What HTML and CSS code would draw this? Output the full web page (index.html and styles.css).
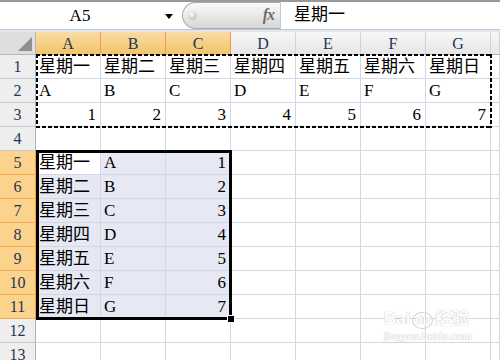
FILE: index.html
```html
<!DOCTYPE html>
<html lang="zh">
<head>
    <meta charset="UTF-8">
    <title>星期一</title>
    <link rel="stylesheet" href="styles.css">
</head>
<body>
    <div class="formula-bar">
        <div class="name-box">A5<span class="drop"></span></div>
        <div class="fx-pill"><span class="knob"></span><span class="fx">fx</span></div>
        <div class="formula-input">星期一</div>
    </div>

    <div class="sheet">
        <div class="corner"></div>
        <div class="ch on">A</div><div class="ch on">B</div><div class="ch on">C</div>
        <div class="ch">D</div><div class="ch">E</div><div class="ch">F</div><div class="ch">G</div><div class="ch"></div>

        <div class="rh">1</div>
        <div class="cell">星期一</div><div class="cell">星期二</div><div class="cell">星期三</div><div class="cell">星期四</div>
        <div class="cell">星期五</div><div class="cell">星期六</div><div class="cell">星期日</div><div class="cell"></div>

        <div class="rh">2</div>
        <div class="cell">A</div><div class="cell">B</div><div class="cell">C</div><div class="cell">D</div>
        <div class="cell">E</div><div class="cell">F</div><div class="cell">G</div><div class="cell"></div>

        <div class="rh">3</div>
        <div class="cell num">1</div><div class="cell num">2</div><div class="cell num">3</div><div class="cell num">4</div>
        <div class="cell num">5</div><div class="cell num">6</div><div class="cell num">7</div><div class="cell"></div>

        <div class="rh">4</div>
        <div class="cell"></div><div class="cell"></div><div class="cell"></div><div class="cell"></div>
        <div class="cell"></div><div class="cell"></div><div class="cell"></div><div class="cell"></div>

        <div class="rh on">5</div>
        <div class="cell active">星期一</div><div class="cell sel">A</div><div class="cell sel num">1</div><div class="cell"></div>
        <div class="cell"></div><div class="cell"></div><div class="cell"></div><div class="cell"></div>

        <div class="rh on">6</div>
        <div class="cell sel">星期二</div><div class="cell sel">B</div><div class="cell sel num">2</div><div class="cell"></div>
        <div class="cell"></div><div class="cell"></div><div class="cell"></div><div class="cell"></div>

        <div class="rh on">7</div>
        <div class="cell sel">星期三</div><div class="cell sel">C</div><div class="cell sel num">3</div><div class="cell"></div>
        <div class="cell"></div><div class="cell"></div><div class="cell"></div><div class="cell"></div>

        <div class="rh on">8</div>
        <div class="cell sel">星期四</div><div class="cell sel">D</div><div class="cell sel num">4</div><div class="cell"></div>
        <div class="cell"></div><div class="cell"></div><div class="cell"></div><div class="cell"></div>

        <div class="rh on">9</div>
        <div class="cell sel">星期五</div><div class="cell sel">E</div><div class="cell sel num">5</div><div class="cell"></div>
        <div class="cell"></div><div class="cell"></div><div class="cell"></div><div class="cell"></div>

        <div class="rh on">10</div>
        <div class="cell sel">星期六</div><div class="cell sel">F</div><div class="cell sel num">6</div><div class="cell"></div>
        <div class="cell"></div><div class="cell"></div><div class="cell"></div><div class="cell"></div>

        <div class="rh on">11</div>
        <div class="cell sel">星期日</div><div class="cell sel">G</div><div class="cell sel num">7</div><div class="cell"></div>
        <div class="cell"></div><div class="cell"></div><div class="cell"></div><div class="cell"></div>

        <div class="rh">12</div>
        <div class="cell"></div><div class="cell"></div><div class="cell"></div><div class="cell"></div>
        <div class="cell"></div><div class="cell"></div><div class="cell"></div><div class="cell"></div>

        <div class="rh">13</div>
        <div class="cell"></div><div class="cell"></div><div class="cell"></div><div class="cell"></div>
        <div class="cell"></div><div class="cell"></div><div class="cell"></div><div class="cell"></div>

        <!-- copied range A1:G3 -->
        <div class="ants"></div>
        <!-- selected range A5:C11 -->
        <div class="selection"><span class="handle"></span></div>

        <div class="watermark">
            <div class="wm-logo">Bai<span class="paw">du</span>经验</div>
            <div class="wm-url">jingyan.baidu.com</div>
        </div>
    </div>
</body>
</html>
```

FILE: styles.css
```css
body{
    margin: 0;
    width: 500px;
    height: 360px;
    overflow: hidden;
    background: #fff;
    font-family: "Liberation Serif", "Noto Sans CJK SC", serif;
    color: #000;
}

/* formula bar */
.formula-bar{
    display: flex;
    height: 27px;
    border-top: 2px solid #9a9a9a;
    border-bottom: 1px solid #b9c6d6;
    box-shadow: 0 2px 0 #e3e6ea;
    margin-bottom: 2px;
    background: #fff;
}
.name-box{
    position: relative;
    width: 182px;
    padding-right: 22px;
    box-sizing: border-box;
    text-align: center;
    font-size: 17px;
    line-height: 27px;
}
.drop{
    position: absolute;
    right: 9px;
    top: 12px;
    border-left: 4px solid transparent;
    border-right: 4px solid transparent;
    border-top: 5px solid #000;
}
.fx-pill{
    position: relative;
    width: 99px;
    border-radius: 14px 0 0 14px;
    border: 1px solid #a9a9a9;
    border-right-color: #c6c6c6;
    background: linear-gradient(#fafafa, #e9e9e9 50%, #d6d6d6);
    box-sizing: border-box;
}
.knob{
    position: absolute;
    left: 5px;
    top: 8px;
    width: 9px;
    height: 9px;
    border-radius: 50%;
    background: radial-gradient(circle at 40% 35%, #fff, #c4c4c4 70%, #a8a8a8);
}
.fx{
    position: absolute;
    right: 6px;
    top: 3px;
    font-style: italic;
    font-size: 16px;
    font-weight: bold;
    color: #6d6d6d;
    letter-spacing: -1px;
}
.formula-input{
    flex: 1;
    padding-left: 13px;
    font-size: 17px;
    line-height: 26px;
}

/* grid */
.sheet{
    position: relative;
    display: grid;
    grid-template-columns: 36px repeat(7, 65px) 1fr;
    grid-template-rows: 23px;
    grid-auto-rows: 24px;
}
.cell{
    box-sizing: border-box;
    border-right: 1px solid #d0d7e5;
    border-bottom: 1px solid #d0d7e5;
    padding: 1px 3px 0 3px;
    font-size: 17px;
    line-height: 22px;
    white-space: nowrap;
    overflow: hidden;
}
.num{
    text-align: right;
    padding-right: 4px;
}
.sel{
    background: #e6e8f3;
}
.active{
    background: #fff;
}

.corner{
    position: relative;
    background: #dedede;
    border-right: 1px solid #b8b8b8;
    border-bottom: 1px solid #b8b8b8;
    box-sizing: border-box;
}
.corner::after{
    content: "";
    position: absolute;
    right: 3px;
    bottom: 3px;
    border-left: 14px solid transparent;
    border-bottom: 14px solid #8f8f8f;
}
.ch{
    box-sizing: border-box;
    text-align: center;
    font-size: 16px;
    line-height: 23px;
    color: #1f3554;
    background: linear-gradient(#f7f7f7, #e6e6e6);
    border-right: 1px solid #d2d2d2;
    border-bottom: 1px solid #a9b3bf;
}
.ch.on{
    background: linear-gradient(#f9dba5, #f2c56c);
    border-right-color: #f29c3f;
    border-bottom-color: #f29c3f;
}
.rh{
    box-sizing: border-box;
    text-align: center;
    font-size: 16px;
    line-height: 24px;
    color: #1f3554;
    background: #eeeeee;
    border-right: 1px solid #a9b3bf;
    border-bottom: 1px solid #c9c9c9;
}
.rh.on{
    background: #fcd38d;
    border-right-color: #f29c3f;
    border-bottom-color: #f4a84f;
}

/* range outlines */
.ants{
    position: absolute;
    left: 36px;
    top: 22px;
    width: 456px;
    height: 74px;
    background:
        repeating-linear-gradient(90deg, #000 0 4px, transparent 4px 6px) top / 100% 2px no-repeat,
        repeating-linear-gradient(90deg, #000 0 4px, transparent 4px 6px) bottom / 100% 2px no-repeat,
        repeating-linear-gradient(180deg, #000 0 4px, transparent 4px 6px) left / 2px 100% no-repeat,
        repeating-linear-gradient(180deg, #000 0 4px, transparent 4px 6px) right / 2px 100% no-repeat;
}
.selection{
    position: absolute;
    left: 36px;
    top: 118px;
    width: 196px;
    height: 170px;
    box-sizing: border-box;
    border: 3px solid #000;
}
.handle{
    position: absolute;
    right: -6px;
    bottom: -6px;
    width: 6px;
    height: 6px;
    background: #000;
    border: 1px solid #fff;
}

.watermark{
    position: absolute;
    left: 384px;
    top: 276px;
    white-space: nowrap;
    color: #fff;
    text-shadow: 0 0 1px #c8c8c8, 0 0 1px #c8c8c8;
    font-family: "Liberation Sans", "Noto Sans CJK SC", sans-serif;
}
.wm-logo{
    font-size: 17px;
    font-weight: bold;
    line-height: 22px;
}
.paw{
    display: inline-block;
    margin: 0 2px;
    padding: 0 2px;
    font-size: 12px;
    line-height: 15px;
    border: 1px solid #d4d4d4;
    border-radius: 50%;
}
.wm-url{
    font-size: 10px;
    font-weight: bold;
    line-height: 14px;
}
```
